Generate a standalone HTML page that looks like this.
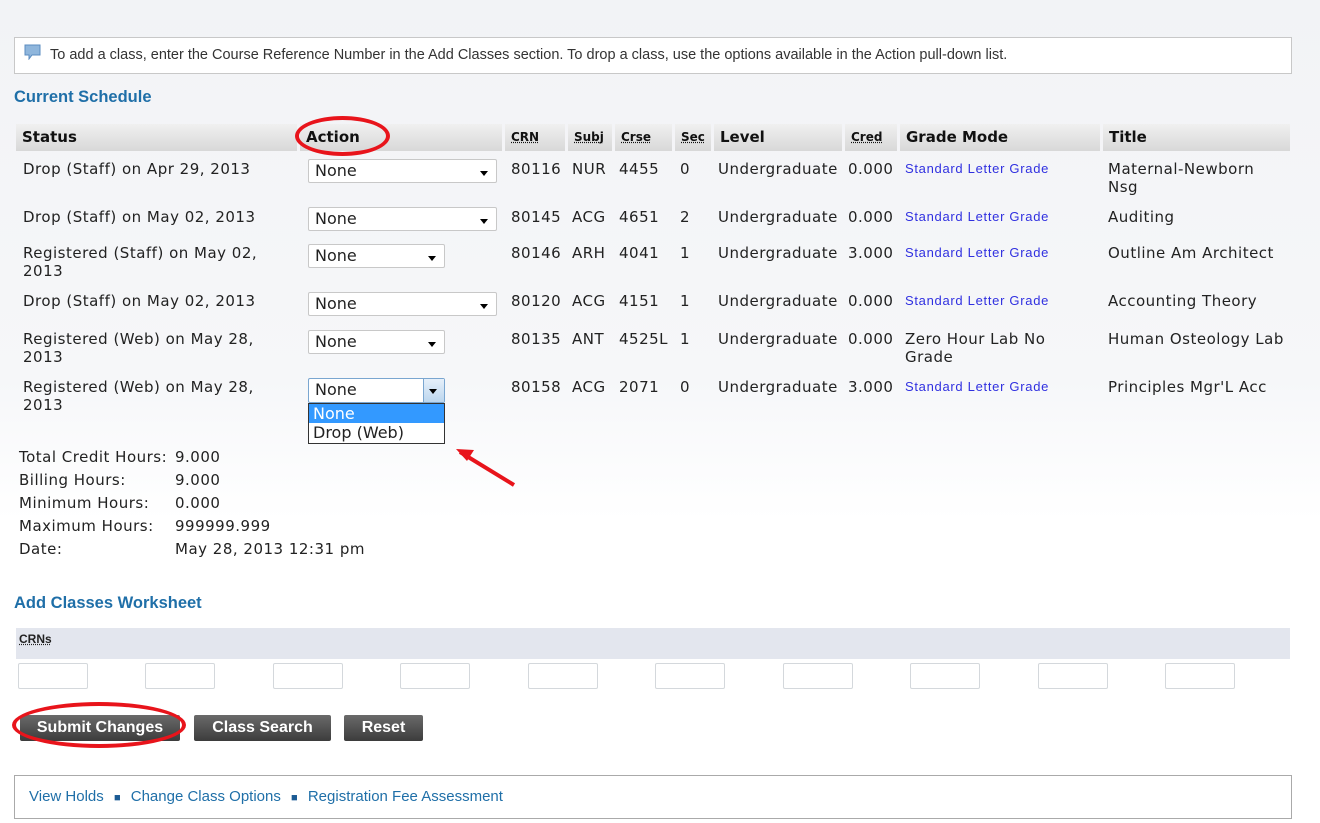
<!DOCTYPE html>
<html><head><meta charset="utf-8"><style>
*{margin:0;padding:0;box-sizing:border-box}
body{width:1320px;height:823px;position:relative;overflow:hidden;background:linear-gradient(#f2f3f6 0,#f6f7f9 380px,#fff 520px);font-family:"DejaVu Sans",Verdana,sans-serif;font-size:15px;letter-spacing:0.5px;color:#222}
.a{position:absolute;white-space:nowrap}
.h2{font-family:"Liberation Sans",Arial,sans-serif;font-weight:bold;font-size:16.5px;letter-spacing:0;color:#1f6fa8}
.th{position:absolute;top:124px;height:27px;background:linear-gradient(#f0f0f0,#d8d8d8);font-weight:bold;font-size:15px;letter-spacing:0;padding:4px 6px;color:#111}
.ths{font-size:12px;text-decoration:underline dotted;padding-top:6px}
.sel{position:absolute;height:24px;background:#fff;border:1px solid #c8c8c8;border-radius:2px;font-size:16px;letter-spacing:0;padding:1px 6px}
.sel:after{content:"";position:absolute;right:8px;top:11px;border:4px solid transparent;border-top:5px solid #000}
.gm{font-family:"Liberation Sans",Arial,sans-serif;font-size:13px;letter-spacing:0.7px;color:#3030e0}
.in{position:absolute;top:663px;width:70px;height:26px;background:#fff;border:1px solid #d4d8dc;border-radius:2px}
.btn{position:absolute;top:715px;height:26px;background:linear-gradient(#6a6a6a,#3c3c3c);color:#fff;font-family:"Liberation Sans",Arial,sans-serif;font-weight:bold;font-size:16px;letter-spacing:0;text-align:center;line-height:26px;border-radius:2px}
.lk{font-family:"Liberation Sans",Arial,sans-serif;font-size:15px;letter-spacing:0;color:#1f6fa8}
</style></head><body>
<div class="a" style="left:14px;top:37px;width:1278px;height:37px;background:#fff;border:1px solid #c8c8c8"></div>
<svg class="a" style="left:24px;top:44px" width="18" height="16"><path d="M1 1h15v10H8l-3 4v-4H1z" fill="#8fb6dc" stroke="#5b8cc0"/></svg>
<div class="a" style="left:50px;top:47px;font-family:'Liberation Sans',Arial,sans-serif;font-size:14.5px;letter-spacing:0;color:#333">To add a class, enter the Course Reference Number in the Add Classes section. To drop a class, use the options available in the Action pull-down list.</div>
<div class="a h2" style="left:14px;top:88px">Current Schedule</div>

<div class="th" style="left:16px;width:281px">Status</div>
<div class="th" style="left:300px;width:202px">Action</div>
<div class="th ths" style="left:505px;width:60px">CRN</div>
<div class="th ths" style="left:568px;width:44px">Subj</div>
<div class="th ths" style="left:615px;width:57px">Crse</div>
<div class="th ths" style="left:675px;width:36px">Sec</div>
<div class="th" style="left:714px;width:128px">Level</div>
<div class="th ths" style="left:845px;width:52px">Cred</div>
<div class="th" style="left:900px;width:200px">Grade Mode</div>
<div class="th" style="left:1103px;width:187px">Title</div>
<div class="a" style="left:295px;top:116px;width:95px;height:40px;border:4px solid #e8141b;border-radius:50%"></div>

<div class="a" style="left:23px;top:160px">Drop (Staff) on Apr 29, 2013</div>
<div class="a" style="left:23px;top:208px">Drop (Staff) on May 02, 2013</div>
<div class="a" style="left:23px;top:244px;line-height:18px">Registered (Staff) on May 02,<br>2013</div>
<div class="a" style="left:23px;top:292px">Drop (Staff) on May 02, 2013</div>
<div class="a" style="left:23px;top:330px;line-height:18px">Registered (Web) on May 28,<br>2013</div>
<div class="a" style="left:23px;top:378px;line-height:18px">Registered (Web) on May 28,<br>2013</div>

<div class="sel" style="left:308px;top:159px;width:189px">None</div>
<div class="sel" style="left:308px;top:207px;width:189px">None</div>
<div class="sel" style="left:308px;top:244px;width:137px">None</div>
<div class="sel" style="left:308px;top:292px;width:189px">None</div>
<div class="sel" style="left:308px;top:330px;width:137px">None</div>
<div class="sel" style="left:308px;top:378px;width:137px;border-color:#7aa6d0;height:25px">None</div>
<div class="a" style="left:423px;top:379px;width:21px;height:23px;background:linear-gradient(#e6f0fa,#bcd6ee);border-left:1px solid #7aa6d0"></div>
<div class="a" style="left:429px;top:389px;border:4px solid transparent;border-top:5px solid #000"></div>
<div class="a" style="left:308px;top:403px;width:137px;height:41px;background:#fff;border:1px solid #333;font-size:16px;letter-spacing:0">
<div style="background:#3399ff;color:#fff;padding:0 4px;height:19px;line-height:19px">None</div>
<div style="padding:0 4px;line-height:20px">Drop (Web)</div></div>
<svg class="a" style="left:450px;top:440px" width="70" height="50"><path d="M64 45L10 12" stroke="#e8141b" stroke-width="4"/><path d="M6 9l18 1-7 11z" fill="#e8141b"/></svg>

<div class="a" style="left:511px;top:160px">80116</div><div class="a" style="left:572px;top:160px">NUR</div><div class="a" style="left:619px;top:160px">4455</div><div class="a" style="left:680px;top:160px">0</div>
<div class="a" style="left:511px;top:208px">80145</div><div class="a" style="left:572px;top:208px">ACG</div><div class="a" style="left:619px;top:208px">4651</div><div class="a" style="left:680px;top:208px">2</div>
<div class="a" style="left:511px;top:244px">80146</div><div class="a" style="left:572px;top:244px">ARH</div><div class="a" style="left:619px;top:244px">4041</div><div class="a" style="left:680px;top:244px">1</div>
<div class="a" style="left:511px;top:292px">80120</div><div class="a" style="left:572px;top:292px">ACG</div><div class="a" style="left:619px;top:292px">4151</div><div class="a" style="left:680px;top:292px">1</div>
<div class="a" style="left:511px;top:330px">80135</div><div class="a" style="left:572px;top:330px">ANT</div><div class="a" style="left:619px;top:330px">4525L</div><div class="a" style="left:680px;top:330px">1</div>
<div class="a" style="left:511px;top:378px">80158</div><div class="a" style="left:572px;top:378px">ACG</div><div class="a" style="left:619px;top:378px">2071</div><div class="a" style="left:680px;top:378px">0</div>

<div class="a" style="left:718px;top:160px">Undergraduate</div><div class="a" style="left:848px;top:160px">0.000</div>
<div class="a" style="left:718px;top:208px">Undergraduate</div><div class="a" style="left:848px;top:208px">0.000</div>
<div class="a" style="left:718px;top:244px">Undergraduate</div><div class="a" style="left:848px;top:244px">3.000</div>
<div class="a" style="left:718px;top:292px">Undergraduate</div><div class="a" style="left:848px;top:292px">0.000</div>
<div class="a" style="left:718px;top:330px">Undergraduate</div><div class="a" style="left:848px;top:330px">0.000</div>
<div class="a" style="left:718px;top:378px">Undergraduate</div><div class="a" style="left:848px;top:378px">3.000</div>

<div class="a gm" style="left:905px;top:161px">Standard Letter Grade</div>
<div class="a gm" style="left:905px;top:209px">Standard Letter Grade</div>
<div class="a gm" style="left:905px;top:245px">Standard Letter Grade</div>
<div class="a gm" style="left:905px;top:293px">Standard Letter Grade</div>
<div class="a" style="left:905px;top:330px;line-height:18px">Zero Hour Lab No<br>Grade</div>
<div class="a gm" style="left:905px;top:379px">Standard Letter Grade</div>

<div class="a" style="left:1108px;top:160px;line-height:18px">Maternal-Newborn<br>Nsg</div>
<div class="a" style="left:1108px;top:208px">Auditing</div>
<div class="a" style="left:1108px;top:244px">Outline Am Architect</div>
<div class="a" style="left:1108px;top:292px">Accounting Theory</div>
<div class="a" style="left:1108px;top:330px">Human Osteology Lab</div>
<div class="a" style="left:1108px;top:378px">Principles Mgr'L Acc</div>

<div class="a" style="left:19px;top:446px;line-height:23px">Total Credit Hours:<br>Billing Hours:<br>Minimum Hours:<br>Maximum Hours:<br>Date:</div>
<div class="a" style="left:175px;top:446px;line-height:23px">9.000<br>9.000<br>0.000<br>999999.999<br>May 28, 2013 12:31 pm</div>

<div class="a h2" style="left:14px;top:594px">Add Classes Worksheet</div>
<div class="a" style="left:16px;top:628px;width:1274px;height:31px;background:#e3e6ee"></div>
<div class="a" style="left:19px;top:632px;font-family:'Liberation Sans',Arial,sans-serif;font-weight:bold;font-size:12px;letter-spacing:0;text-decoration:underline dotted">CRNs</div>
<div class="in" style="left:18px"></div><div class="in" style="left:145px"></div><div class="in" style="left:273px"></div><div class="in" style="left:400px"></div><div class="in" style="left:528px"></div><div class="in" style="left:655px"></div><div class="in" style="left:783px"></div><div class="in" style="left:910px"></div><div class="in" style="left:1038px"></div><div class="in" style="left:1165px"></div>

<div class="btn" style="left:20px;width:160px">Submit Changes</div>
<div class="btn" style="left:194px;width:137px">Class Search</div>
<div class="btn" style="left:344px;width:79px">Reset</div>
<div class="a" style="left:12px;top:702px;width:174px;height:46px;border:4px solid #e8141b;border-radius:50%"></div>

<div class="a" style="left:14px;top:775px;width:1278px;height:44px;background:#fff;border:1px solid #aaa"></div>
<div class="a lk" style="left:29px;top:788px">View Holds <span style="color:#1b5b94;font-size:11px;margin:0 6px">■</span> Change Class Options <span style="color:#1b5b94;font-size:11px;margin:0 6px">■</span> Registration Fee Assessment</div>
</body></html>
